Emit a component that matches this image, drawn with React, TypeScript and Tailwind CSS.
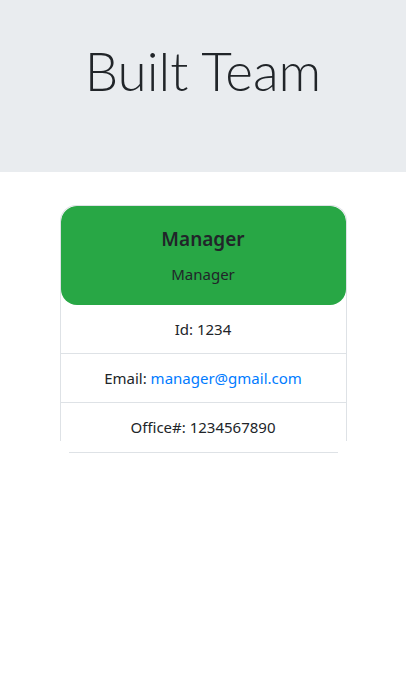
const App = () => {
   return (
      <div className="min-h-[683px] bg-white text-[#212529] font-['Noto_Sans',sans-serif]">
         <div className="bg-[#e9ecef] pt-[37px] pb-[68px] text-center">
            <h1 className="text-[53px] leading-[67px] font-light font-['Lato',sans-serif]">Built Team</h1>
         </div>
         <div className="flex flex-col items-center mt-[33px]">
            <div className="w-[287px]">
               <div className="h-[236px] overflow-hidden rounded-t-2xl border-x border-t border-[#dee2e6]">
                  <div className="flex flex-col items-center bg-[#28a745] rounded-2xl h-[99px] pt-[21px]">
                     <h2 className="text-[19px] leading-6 font-semibold">Manager</h2>
                     <div className="text-[15px] leading-6 mt-[11px]">Manager</div>
                  </div>
                  <div className="text-[15px] text-center">
                     <div className="py-3 leading-6 border-b border-[#dee2e6]">Id: 1234</div>
                     <div className="py-3 leading-6 border-b border-[#dee2e6]">
                        Email: <a className="text-[#007bff]" href="#">manager@gmail.com</a>
                     </div>
                     <div className="py-3 leading-6">Office#: 1234567890</div>
                  </div>
               </div>
               <div className="mt-[11px] mx-[9px] h-px bg-[#dee2e6]" />
            </div>
         </div>
      </div>
   );
};

export default App;
